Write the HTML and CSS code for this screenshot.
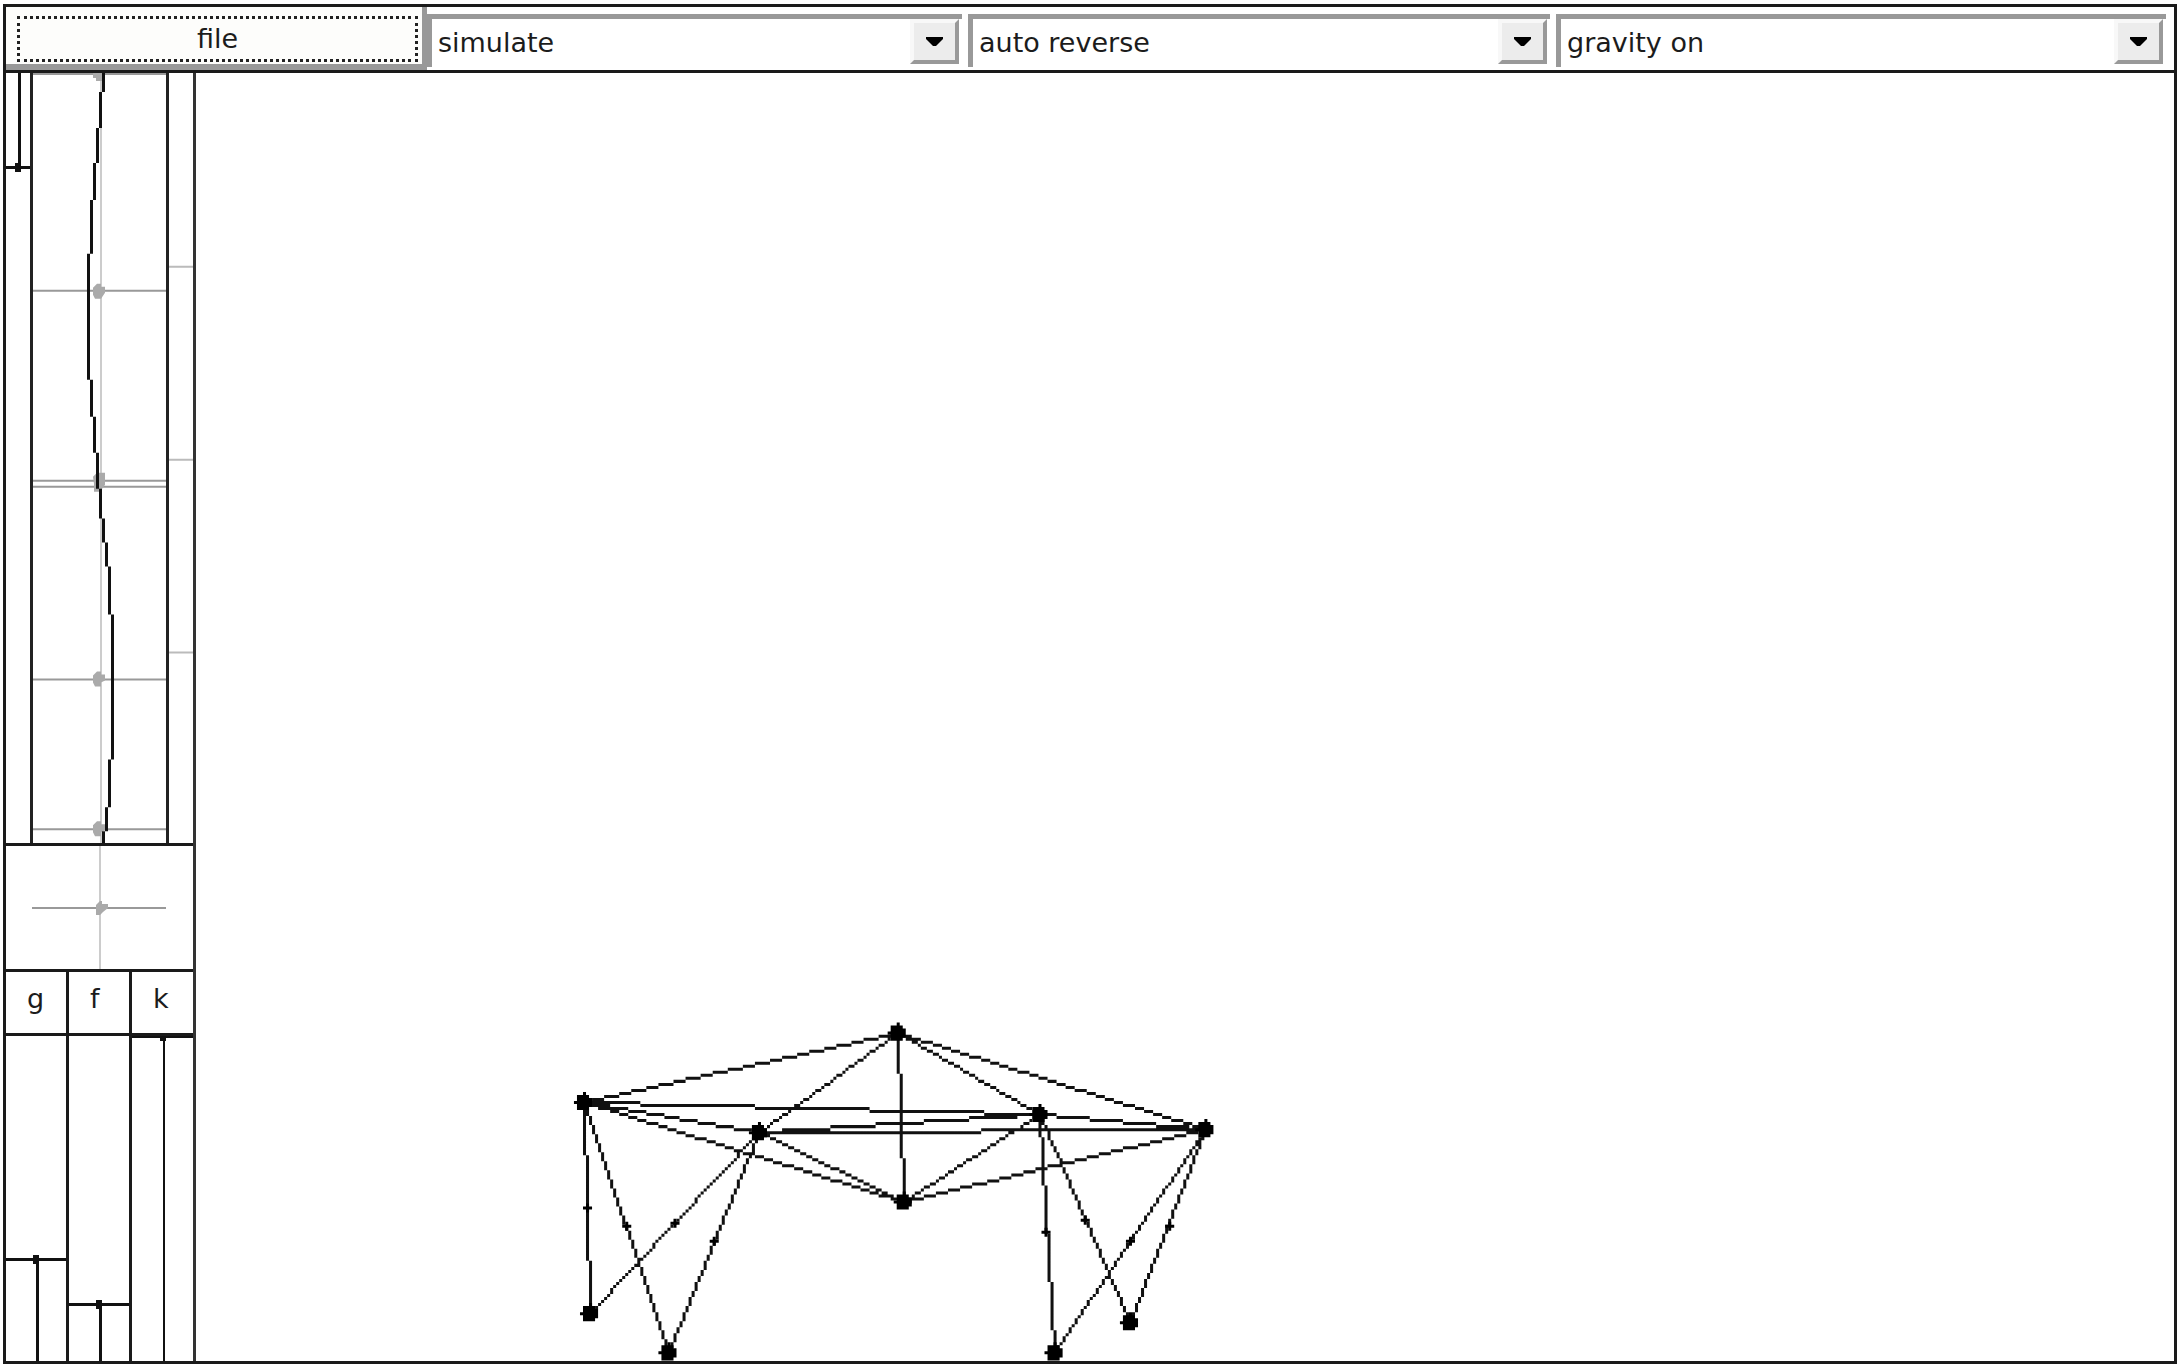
FILE: index.html
```html
<!DOCTYPE html>
<html lang="en">
<head>
<meta charset="utf-8">
<title>simulate</title>
<link rel="stylesheet" href="styles.css">
</head>
<body>
<div class="frame">
  <header class="toolbar">
    <button class="file" type="button"><span class="focus">file</span></button>
    <div class="combo">
      <select aria-label="mode"><option>simulate</option><option>construct</option></select>
      <span class="drop"><svg width="17" height="9" viewBox="0 0 17 9"><path d="M0 0H17V2L10 9H7L0 2Z"/></svg></span>
    </div>
    <div class="combo">
      <select aria-label="direction"><option>auto reverse</option><option>forward</option></select>
      <span class="drop"><svg width="17" height="9" viewBox="0 0 17 9"><path d="M0 0H17V2L10 9H7L0 2Z"/></svg></span>
    </div>
    <div class="combo">
      <select aria-label="gravity"><option>gravity on</option><option>gravity off</option></select>
      <span class="drop"><svg width="17" height="9" viewBox="0 0 17 9"><path d="M0 0H17V2L10 9H7L0 2Z"/></svg></span>
    </div>
  </header>
  <div class="work">
    <aside class="side">
      <div class="wave">
        <div class="track"><input class="slider down" type="range" aria-label="wave amplitude" min="0" max="100" step="any" value="12.2" style="--fill:12.2%"></div>
        <svg class="plot" viewBox="0 0 133 771" preserveAspectRatio="none">
          <path class="axis" d="M67 0h2v771h-2z"/>
          <path class="level" d="M0 0h133v2H0zM0 217h133v2H0zM0 407h133v2H0zM0 413h133v2H0zM0 606h133v2H0zM0 756h133v2H0z"/>
          <path class="knot" d="M60 0h9v8h-6v-3h-3zM60 215l4-4h4v3h4v6l-4 6h-6l-2-4zM60 404l4-4h8v12l-5 7h-6v-8zM60 603l4-4h4v3h4v6l-4 2v4h-6l-2-4zM60 753l4-4h4v3h4v6l-4 2v4h-6l-2-4z"/>
          <path class="curve" d="M69 0h3v19h-3zM66 19h3v36h-3zM63 55h3v35h-3zM60 90h3v37h-3zM57 127h3v54h-3zM54 181h3v126h-3zM57 307h3v37h-3zM60 344h3v36h-3zM63 380h3v36h-3zM66 416h3v30h-3zM69 446h3v24h-3zM72 470h3v24h-3zM75 494h3v48h-3zM78 542h3v145h-3zM75 687h3v48h-3zM72 735h3v24h-3zM69 759h3v12h-3z"/>
        </svg>
        <svg class="marks" viewBox="0 0 24 771" preserveAspectRatio="none">
          <path class="tick" d="M0 193h24v2H0zM0 386h24v2H0zM0 579h24v2H0z"/>
        </svg>
      </div>
      <svg class="cross" viewBox="6 847 187 123">
        <path class="axis" d="M99 847h2v123h-2z"/>
        <path class="level" d="M32 908h134v2H32z"/>
        <path class="knot" d="M96 906l4-4h2v3h6v4l-5 4-3 3h-4z"/>
      </svg>
      <div class="params">
        <div class="param">
          <label for="g">g</label>
          <div class="track"><input class="slider" id="g" type="range" min="0" max="100" step="any" value="31.1" style="--fill:31.1%"></div>
        </div>
        <div class="param">
          <label for="f">f</label>
          <div class="track"><input class="slider" id="f" type="range" min="0" max="100" step="any" value="17.2" style="--fill:17.2%"></div>
        </div>
        <div class="param">
          <label for="k">k</label>
          <div class="track"><input class="slider" id="k" type="range" min="0" max="100" step="any" value="100" style="--fill:100%"></div>
        </div>
      </div>
    </aside>
    <main class="stage">
      <svg id="model" viewBox="64.7 24.2 655 427" preserveAspectRatio="xMinYMax meet" role="img" aria-label="model"></svg>
    </main>
  </div>
</div>
<script src="model.js"></script>
</body>
</html>
```
FILE: styles.css
```css
* { box-sizing: border-box; }

body {
  margin: 0;
  background: #fff;
  color: #1c1c1c;
  font: 27px/32px "DejaVu Sans", Verdana, sans-serif;
}

.frame {
  display: flex;
  flex-direction: column;
  height: calc(100vh - 10px);
  margin: 4px 3px 6px;
  border: 3px solid #1a1a1a;
}

.toolbar {
  display: grid;
  grid-template-columns: 421fr 541fr 588fr 616fr;
  height: 66px;
  padding-right: 2px;
  border-bottom: 3px solid #1a1a1a;
}

.file {
  display: flex;
  margin: 0;
  padding: 9px 4px 2px 11px;
  border: 0 solid #999;
  border-width: 0 5px 6px 0;
  background: #fdfdfb;
  color: inherit;
  font: inherit;
}

.focus {
  flex: 1;
  padding-top: 4px;
  border: 3px dotted #222;
}

.combo {
  display: flex;
  margin: 7px 6px 3px 0;
  padding: 0 3px 3px 0;
  border: 0 solid #999;
  border-width: 5px 0 0 5px;
  background: #fff;
}

.combo select {
  flex: 1;
  min-width: 0;
  margin-right: -49px;
  padding: 2px 56px 0 6px;
  border: 0;
  background: #fff;
  color: inherit;
  font: inherit;
  appearance: none;
}

.drop {
  display: flex;
  align-items: center;
  justify-content: center;
  width: 49px;
  height: 45px;
  border: 4px solid #999;
  border-top-color: #f8f8f8;
  border-left-color: #f8f8f8;
  background: #ececec;
  pointer-events: none;
}

.work {
  display: grid;
  grid-template-columns: 190px 1fr;
  flex: 1;
  min-height: 0;
}

.side {
  display: grid;
  grid-template-rows: minmax(0, 771fr) 129px minmax(0, 389fr);
  min-height: 0;
  border-right: 3px solid #333;
}

.wave {
  display: grid;
  grid-template-columns: 24px 139px 24px;
  min-height: 0;
}

.plot,
.marks,
.cross {
  width: 100%;
  height: 100%;
  min-height: 0;
}

.plot {
  border: solid #222;
  border-width: 0 3px;
}

.cross {
  border: solid #1a1a1a;
  border-width: 3px 0;
}

.axis { fill: #ccc; }
.level { fill: #999; }
.tick { fill: #bbb; }
.knot { fill: #aaa; }
.curve { fill: #111; }

.params {
  display: grid;
  grid-template-columns: 63px 63px 61px;
  min-height: 0;
}

.param {
  display: flex;
  flex-direction: column;
  min-height: 0;
  border-right: 3px solid #1a1a1a;
}

.param:last-child { border-right: 0; }

.param label {
  height: 64px;
  padding: 11px 0 0 21px;
  border-bottom: 3px solid #1a1a1a;
}

.track {
  flex: 1;
  min-height: 0;
  overflow: hidden;
}

/* Knob, crossbar and stem are painted on the input; the thumb itself is only a hit area. */
.slider {
  --at: calc(100% - var(--fill));
  display: block;
  width: 100%;
  height: calc(100% + 8px);
  margin: -4px 0;
  appearance: none;
  writing-mode: vertical-lr;
  direction: rtl;
  background-image:
    linear-gradient(#111, #111),
    linear-gradient(transparent 3px, #111 3px, #111 6px, transparent 6px),
    linear-gradient(to right, transparent 50%, #111 50%, #111 calc(50% + 3px), transparent 0);
  background-position: center var(--at), center var(--at), 0 100%;
  background-size: 6px 9px, 100% 9px, 100% var(--fill);
  background-repeat: no-repeat;
}

.slider.down {
  --at: var(--fill);
  direction: ltr;
  background-position: center var(--at), center var(--at), 0 0;
}

.slider::-webkit-slider-thumb {
  appearance: none;
  width: 24px;
  height: 9px;
  background: transparent;
}

.stage {
  min-width: 0;
  min-height: 0;
}

.stage svg {
  display: block;
  width: 100%;
  height: 100%;
}

.limb { fill: #111; }
.mass { fill: #000; }
```
FILE: model.js
```js
// Point masses, in simulation pixels
const masses = {
  a: [297, 342], b: [193, 365], c: [251, 375], d: [299, 398], e: [344, 369],
  f: [399, 374], g: [195, 435], h: [221, 448], i: [349, 448], j: [374, 438]
};
const springs = 'ab ac ad ae af bc bd be bg bh cd ce cf cg ch de df ef ei ej fi fj'.split(' ');
// Muscle handles sit part-way along the leg springs
const muscles = [[194, 400], [207, 406], [223, 405], [236, 411], [346, 408], [359, 404], [374, 411], [387, 406]];

const cell = (x, y) => `M${x} ${y}h1v1h-1z`;

// Integer line walk, one square cell per simulation pixel
function line([x, y], [x1, y1]) {
  const dx = Math.abs(x1 - x), dy = -Math.abs(y1 - y);
  const sx = x < x1 ? 1 : -1, sy = y < y1 ? 1 : -1;
  let err = dx + dy, path = '';
  for (;;) {
    path += cell(x, y);
    if (x === x1 && y === y1) return path;
    const e2 = 2 * err;
    if (e2 >= dy) { err += dy; x += sx; }
    if (e2 <= dx) { err += dx; y += sy; }
  }
}

function add(className, d) {
  const path = document.createElementNS('http://www.w3.org/2000/svg', 'path');
  path.setAttribute('class', className);
  path.setAttribute('d', d);
  document.getElementById('model').append(path);
}

add('limb', springs.map(s => line(masses[s[0]], masses[s[1]])).join(''));
add('mass', Object.values(masses).map(([x, y]) =>
  `M${x} ${y - 3}h1v1h1v1h1v3h-1v1h-4v-2h-1v-1h1v-2h2z`).join(''));
add('mass', muscles.map(([x, y]) => `M${x - 1} ${y}h1v-1h1v1h1v1h-1v1h-1v-1h-1z`).join(''));
```
